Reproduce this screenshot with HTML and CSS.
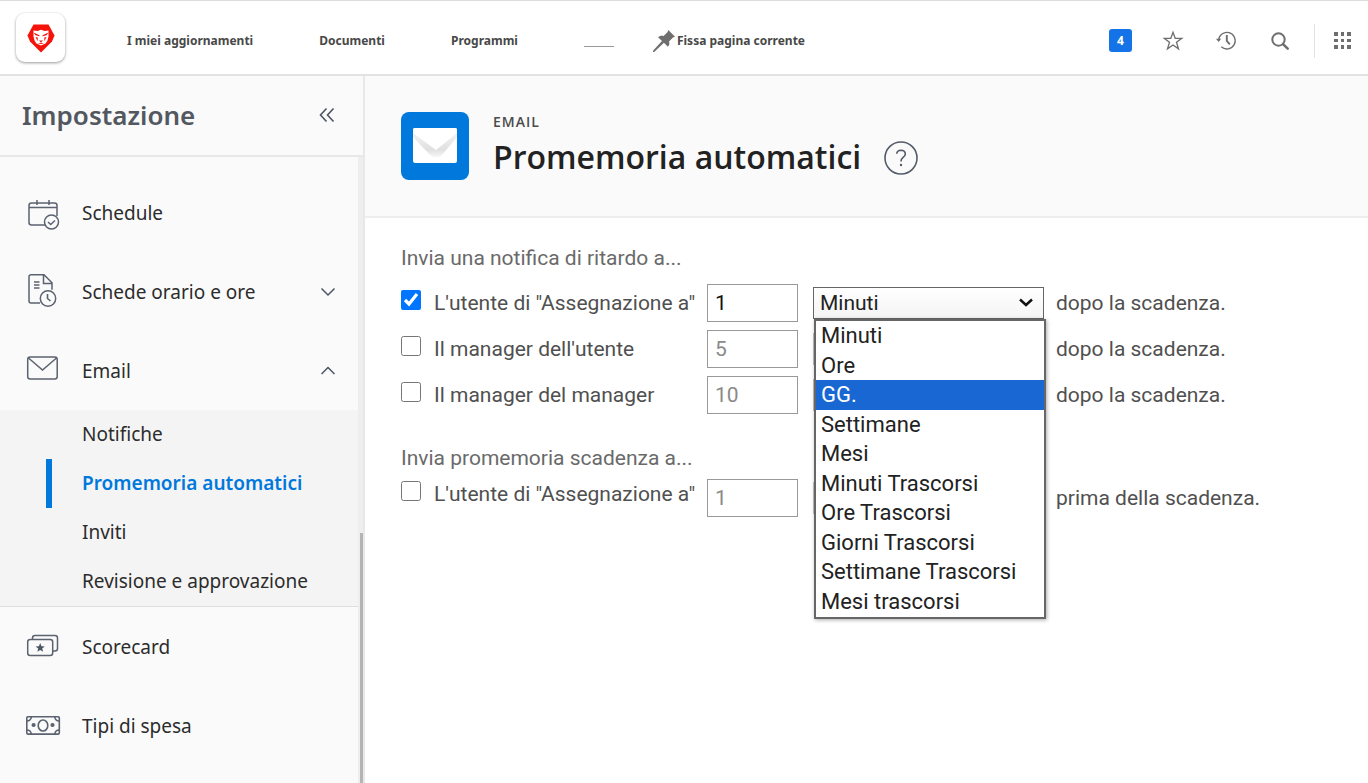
FILE: index.html
```html
<!DOCTYPE html>
<html lang="it">
<head>
<meta charset="utf-8">
<title>Promemoria automatici</title>
<meta name="viewport" content="width=device-width, initial-scale=1">
<link rel="stylesheet" href="styles.css">
</head>
<body>
<header class="topbar">
  <a class="brand" href="#" aria-label="Home">
    <svg width="28" height="30" viewBox="0 0 28 30" aria-hidden="true">
      <path fill="#f5140a" d="M6.500 1.500h15L27.500 12.500l-2.500 6L14 29.500 3 18.500 .5 12.500z"/>
      <path fill="#fff" d="M6.500 7.500l4 .5L14 6.800l3.500 1.200 4-.5v6l-1.200 4.500-1.800 2.500L14 22.500l-4.500-2L7.700 18 6.500 13.500z"/>
      <path fill="#f5140a" d="M6.500 9.500l6 2.800v1l-4-1zM21.500 9.500l-6 2.800v1l4-1zM8.500 14l2.200.4v3.800zM19.500 14l-2.200.4v3.800zM12 17.500h4L14 19.500zM11 20.300l3-.5 3 .5-3 .7z"/>
    </svg>
  </a>
  <nav class="pins" aria-label="Pagine">
    <a href="#">I miei aggiornamenti</a>
    <a href="#">Documenti</a>
    <a href="#">Programmi</a>
    <span class="pin-rule"></span>
    <button class="pin-button" type="button">
      <svg width="22" height="22" viewBox="0 0 22 22" aria-hidden="true"><path fill="#6e6e6e" d="M15.300 0L22 6.700l-2 .8-4 4c.8 1.900.4 3.800-1.100 5.300l-4-4L1.200 22 0 22l.2-1.600 8.800-9.300-3.900-3.900c1.400-1.500 3.400-2 5.500-1.100l4-4z"/></svg>
      Fissa pagina corrente
    </button>
  </nav>
  <div class="tools">
    <button class="badge" type="button" aria-label="4 notifiche">4</button>
    <button class="tool" type="button" aria-label="Preferiti"><svg width="22" height="22" viewBox="0 0 22 22" fill="none" stroke="#6e6e6e" stroke-width="1.300"><path d="M10 2.300l2.200 6h6.600l-5.300 4 2 6.600L10 15l-5.500 3.900 2-6.600-5.300-4h6.600z"/></svg></button>
    <button class="tool" type="button" aria-label="Recenti"><svg width="22" height="22" viewBox="0 0 22 22" fill="none" stroke="#6e6e6e"><path stroke-width="1.300" d="M2.600 10.500a8.300 8.300 0 1 1 2.700 6.300"/><path stroke-width="1.900" d="M10.800 5v6l3 3.300"/><path fill="#6e6e6e" stroke="none" d="M0 8.800h5.200L2.600 12z"/></svg></button>
    <button class="tool" type="button" aria-label="Cerca"><svg width="22" height="22" viewBox="0 0 22 22" fill="none" stroke="#6e6e6e"><circle cx="9.500" cy="9.500" r="6.200" stroke-width="2"/><path stroke-width="2.600" stroke-linecap="round" d="M14.300 14.300l4.400 4.400"/></svg></button>
    <button class="tool apps" type="button" aria-label="Menu principale"><svg width="18" height="18" viewBox="0 0 18 18" fill="#6e6e6e"><path d="M0 0h4v4H0zM7 0h3v4H7zM13 0h4v4h-4zM0 7h4v3H0zM7 7h3v3H7zM13 7h4v3h-4zM0 13h4v4H0zM7 13h3v4H7zM13 13h4v4h-4z"/></svg></button>
  </div>
</header>

<div class="layout">
  <aside class="sidebar">
    <div class="sidebar-head">
      <h2>Impostazione</h2>
      <button class="plain" type="button" aria-label="Comprimi"><svg width="16" height="16" viewBox="0 0 16 16" fill="none" stroke="#4b5563" stroke-width="1.600"><path d="M7.500 1.500L1.500 8l6 6.500M14.500 1.500L8.500 8l6 6.500"/></svg></button>
    </div>
    <div class="sidebar-scroll">
      <nav class="menu" aria-label="Impostazione">
        <a class="item" href="#">
          <svg width="36" height="36" viewBox="0 0 36 36" fill="none" stroke="#5b6270" stroke-width="1.500"><path d="M19 30H5.500Q3 30 3 27.500V10.500Q3 8 5.500 8h23Q31 8 31 10.500V21M3 12.500h28M11 5v5M23 5v5"/><circle cx="25.500" cy="27" r="7"/><path d="M22 27l2.700 2.500 4.300-4"/></svg>
          <span>Schedule</span>
        </a>
        <a class="item" href="#">
          <svg width="36" height="36" viewBox="0 0 36 36" fill="none" stroke="#5b6270" stroke-width="1.500"><path d="M14 29H5Q3 29 3 27V2.500Q3 .8 5 .8h13l8 8v7M17.500 .8V9.500h8.500M8 8h5.500M8 11h5.500M8 14h5.500"/><circle cx="22" cy="24.500" r="7.700"/><path stroke-width="1.600" d="M21.500 20V24.500l3 2.500"/></svg>
          <span>Schede orario e ore</span>
          <svg class="chev" width="16" height="10" viewBox="0 0 16 10" fill="none" stroke="#4b5563" stroke-width="1.500"><path d="M1.500 1.500L8 8l6.500-6.500"/></svg>
        </a>
        <a class="item" href="#" aria-expanded="true">
          <svg width="36" height="36" viewBox="0 0 36 36" fill="none" stroke="#5b6270" stroke-width="1.500"><rect x="1.700" y="4" width="29.500" height="22" rx="2.500"/><path d="M2.500 5L16.500 17 30.500 5"/></svg>
          <span>Email</span>
          <svg class="chev" width="16" height="10" viewBox="0 0 16 10" fill="none" stroke="#4b5563" stroke-width="1.500"><path d="M1.500 8L8 1.500 14.500 8"/></svg>
        </a>
        <div class="submenu">
          <a href="#">Notifiche</a>
          <a class="current" href="#" aria-current="page">Promemoria automatici</a>
          <a href="#">Inviti</a>
          <a href="#">Revisione e approvazione</a>
        </div>
        <a class="item" href="#">
          <svg width="36" height="36" viewBox="0 0 36 36" fill="none" stroke="#5b6270" stroke-width="1.500"><rect x="1.700" y="10.500" width="25" height="16" rx="2.500"/><path d="M6.500 10.500V9Q6.500 6.500 9 6.500h20Q31.500 6.500 31.500 9v10.500Q31.500 22 29 22h-2.300"/><path fill="#4b5563" stroke="none" d="M14.200 14l1.300 3.200 3.300.2-2.600 2.100.9 3.300-2.900-1.800-2.900 1.800.9-3.300-2.600-2.100 3.300-.2z"/></svg>
          <span>Scorecard</span>
        </a>
        <a class="item" href="#">
          <svg width="36" height="36" viewBox="0 0 36 36" fill="none" stroke="#5b6270" stroke-width="1.600"><rect x=".8" y="8.800" width="32.500" height="17.300" rx="1"/><ellipse cx="17" cy="17.500" rx="4.800" ry="5.500"/><path d="M.8 13q4 0 4.500-4M33.300 13q-4 0-4.500-4M.8 22q4 0 4.500 4M33.300 22q-4 0-4.500 4"/><circle cx="7.600" cy="17" r="1.300" fill="#5b6270"/><circle cx="26.500" cy="17" r="1.300" fill="#5b6270"/></svg>
          <span>Tipi di spesa</span>
        </a>
      </nav>
      <div class="track"><div class="thumb"></div></div>
    </div>
  </aside>

  <main class="content">
    <div class="page-head">
      <svg width="68" height="68" viewBox="0 0 68 68" aria-hidden="true">
        <defs>
          <linearGradient id="fold" gradientUnits="userSpaceOnUse" x1="0" y1="22" x2="0" y2="48"><stop offset="0" stop-color="#f2f2f2"/><stop offset="0.600" stop-color="#e0e0e0"/><stop offset="1" stop-color="#fff"/></linearGradient>
        </defs>
        <rect width="68" height="68" rx="8" fill="#0078dc"/>
        <rect x="12" y="16" width="44" height="35" rx="2" fill="#fff"/>
        <path fill="url(#fold)" d="M12 21v4l17 18q6 5 12 0l15-18v-4z"/>
        <path fill="#fff" d="M12 21v-3q0-2 2-2h40q2 0 2 2v3L35 38z"/>
      </svg>
      <div class="titles">
        <div class="eyebrow">EMAIL</div>
        <h1>Promemoria automatici</h1>
      </div>
      <button class="plain help" type="button" aria-label="Guida"><svg width="34" height="34" viewBox="0 0 34 34" fill="none" stroke="#545b69" stroke-width="1.600"><circle cx="17" cy="17" r="16"/><path d="M12.700 12.800Q13 9.300 17 9.200q4.300.1 4.300 3.700 0 1.800-2.200 3.500-2.100 1.600-2.100 4"/><circle cx="17" cy="24" r="1.200" fill="#545b69" stroke="none"/></svg></button>
    </div>

    <form class="form">
      <fieldset>
        <legend>Invia una notifica di ritardo a...</legend>
        <div class="row">
          <label class="who"><input type="checkbox" checked><span>L'utente di "Assegnazione a"</span></label>
          <input class="amount" type="text" value="1" aria-label="Quantità">
          <div class="picker">
            <select aria-label="Unità"><option>Minuti</option></select>
            <svg width="16" height="10" viewBox="0 0 16 10" fill="none" stroke="#111" stroke-width="2.500" aria-hidden="true"><path d="M2 1.500l6 5.500 6-5.500"/></svg>
            <ul class="options" role="listbox" aria-label="Unità">
              <li role="option">Minuti</li>
              <li role="option">Ore</li>
              <li role="option" class="active" aria-selected="true">GG.</li>
              <li role="option">Settimane</li>
              <li role="option">Mesi</li>
              <li role="option">Minuti Trascorsi</li>
              <li role="option">Ore Trascorsi</li>
              <li role="option">Giorni Trascorsi</li>
              <li role="option">Settimane Trascorsi</li>
              <li role="option">Mesi trascorsi</li>
            </ul>
          </div>
          <span class="when">dopo la scadenza.</span>
        </div>
        <div class="row">
          <label class="who"><input type="checkbox"><span>Il manager dell'utente</span></label>
          <input class="amount" type="text" value="5" disabled aria-label="Quantità">
          <div class="picker"><select disabled aria-label="Unità"></select></div>
          <span class="when">dopo la scadenza.</span>
        </div>
        <div class="row">
          <label class="who"><input type="checkbox"><span>Il manager del manager</span></label>
          <input class="amount" type="text" value="10" disabled aria-label="Quantità">
          <div class="picker"><select disabled aria-label="Unità"></select></div>
          <span class="when">dopo la scadenza.</span>
        </div>
      </fieldset>
      <fieldset class="before">
        <legend>Invia promemoria scadenza a...</legend>
        <div class="row">
          <label class="who"><input type="checkbox"><span>L'utente di "Assegnazione a"</span></label>
          <input class="amount" type="text" value="1" disabled aria-label="Quantità">
          <div class="picker"><select disabled aria-label="Unità"></select></div>
          <span class="when">prima della scadenza.</span>
        </div>
      </fieldset>
    </form>
  </main>
</div>
</body>
</html>
```
FILE: styles.css
```css
* { box-sizing: border-box; }
body {
  margin: 0;
  min-height: 100vh;
  display: flex;
  flex-direction: column;
  background: #fff;
  color: #2c2c2c;
  font-family: "Noto Sans", "Open Sans", sans-serif;
}
a { color: inherit; text-decoration: none; }
button { padding: 0; border: 0; background: none; font: inherit; color: inherit; }
svg { display: block; flex: none; }

.topbar {
  display: flex;
  align-items: center;
  height: 76px;
  padding: 0 16px;
  border-top: 1px solid #dcdcdc;
  border-bottom: 2px solid #e2e2e2;
}
.brand {
  display: grid;
  place-items: center;
  width: 49px;
  height: 49px;
  border-radius: 9px;
  box-shadow: 0 1px 3px #00000066;
}
.pins {
  display: flex;
  align-items: center;
  gap: 66px;
  margin: 6px 0 0 62px;
  font-size: 12px;
  font-weight: 700;
  color: #484848;
  white-space: nowrap;
}
.pin-rule { width: 30px; height: 1px; margin-top: 12px; background: #999; }
.pin-button { display: flex; align-items: center; gap: 2px; margin-left: -27px; }
.tools { display: flex; align-items: center; gap: 31px; margin-left: auto; margin-top: 6px; }
.badge {
  width: 23px;
  height: 23px;
  border-radius: 3px;
  background: #1473e6;
  color: #fff;
  font-size: 12px;
  font-weight: 700;
}
.apps { margin-left: -8px; padding: 8px 0 8px 19px; border-left: 1px solid #e1e1e1; }

.layout { display: flex; flex: 1; }
.sidebar {
  display: flex;
  flex-direction: column;
  flex: 0 0 365px;
  background: #fafafa;
  border-right: 2px solid #e8e8e8;
}
.sidebar-head {
  display: flex;
  align-items: center;
  justify-content: space-between;
  height: 81px;
  padding: 0 28px 2px 22px;
  border-bottom: 2px solid #e8e8e8;
}
h1, h2 { margin: 0; font-weight: 600; }
.sidebar-head h2 { font-size: 26px; line-height: 36px; color: #535860; }
.sidebar-scroll { display: flex; flex: 1; }
.menu { flex: 1; padding-top: 16px; font-size: 19px; }
.item { display: flex; align-items: center; height: 79px; padding: 0 22px 0 26px; }
.item span { margin-left: 20px; }
.chev { margin-left: auto; }
.submenu { background: #f4f4f4; border-bottom: 1px solid #dedede; }
.submenu a { display: block; padding-left: 82px; line-height: 49px; }
.submenu .current {
  margin-left: 46px;
  padding-left: 30px;
  border-left: 6px solid #0078dc;
  color: #0078dc;
  font-weight: 600;
}
.track { display: flex; flex-direction: column; align-items: flex-end; justify-content: flex-end; width: 5px; background: #eee; }
.thumb { width: 3px; height: 40%; background: #b4b4b4; }

.content { flex: 1; min-width: 0; }
.page-head {
  display: flex;
  align-items: center;
  height: 142px;
  padding: 0 36px;
  background: #fafafa;
  border-bottom: 2px solid #eee;
}
.titles { margin-left: 24px; padding-top: 4px; font-family: "Open Sans", sans-serif; }
.eyebrow { font-size: 14px; line-height: 18px; font-weight: 600; letter-spacing: 1px; color: #4b4b4b; }
h1 { font-size: 32px; line-height: 52px; color: #222; }
.help { margin: 24px 0 0 23px; }

.form { padding: 25px 36px; font-family: Roboto, sans-serif; font-size: 21px; color: #505050; }
fieldset { margin: 0; padding: 0; border: 0; }
legend { padding: 0; margin-bottom: 11px; line-height: 30px; color: #6a6a6a; }
.before { margin-top: 21px; }
.before legend { margin-bottom: 6px; }
.before .who { align-self: flex-start; height: 30px; }
.row { display: flex; align-items: center; height: 38px; margin-bottom: 8px; white-space: nowrap; }
.who { display: flex; align-items: center; width: 306px; }
.who input { width: 20px; height: 20px; margin: 0 13px 6px 0; accent-color: #0075ff; }
.amount {
  width: 91px;
  height: 38px;
  padding: 0 7px;
  border: 1px solid #999;
  border-radius: 0;
  background: #fff;
  font: inherit;
  color: #111;
}
.amount:disabled { color: #8a8a8a; }
.picker { position: relative; width: 231px; margin: 0 12px 0 15px; }
.picker select {
  appearance: none;
  display: block;
  width: 100%;
  height: 32px;
  padding: 0 6px;
  border: 1px solid #666;
  border-radius: 0;
  background: linear-gradient(#fff, #f4f4f4);
  font: inherit;
  color: #222;
}
.picker select:disabled { border-color: #aaa; }
.picker svg { position: absolute; top: 11px; right: 10px; }
.options {
  position: absolute;
  z-index: 2;
  top: 32px;
  left: 1px;
  display: grid;
  grid-template-rows: repeat(10, minmax(0, 1fr));
  width: 232px;
  height: 300px;
  margin: 0;
  padding: 0 0 1px;
  border: 2px solid #666;
  background: #fff;
  box-shadow: 1px 1px 4px #00000055;
  list-style: none;
  font-size: 22px;
  color: #222;
}
.options li { padding-left: 5px; line-height: 29px; }
.options .active { background: #1967d2; color: #fff; }
```
